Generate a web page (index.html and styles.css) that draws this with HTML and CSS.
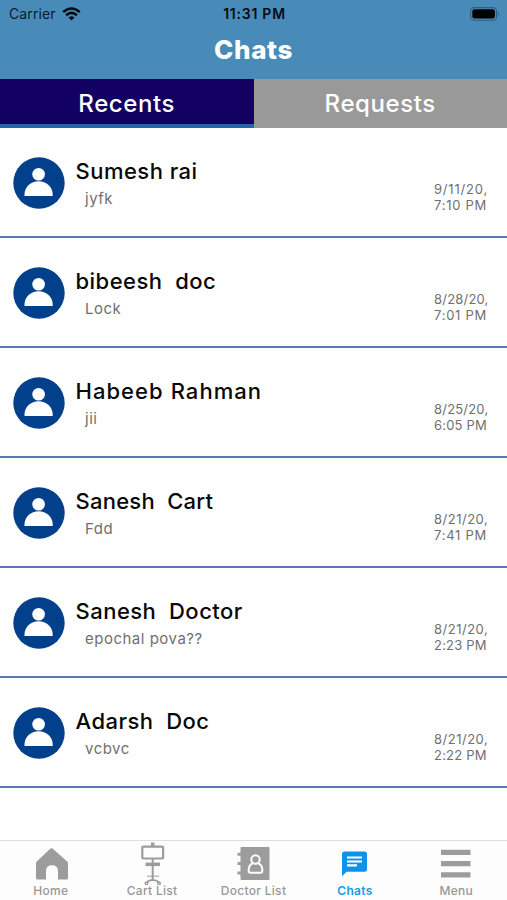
FILE: index.html
```html
<!DOCTYPE html>
<html lang="en">
<head>
<meta charset="utf-8">
<title>Chats</title>
<link rel="stylesheet" href="styles.css">
</head>
<body>
<svg class="defs" width="0" height="0" aria-hidden="true">
  <symbol id="avatar" viewBox="0 0 52 52">
    <circle cx="26" cy="26" r="25.7" fill="#03408b"/>
    <circle cx="25.6" cy="17.3" r="6.3" fill="#fff"/>
    <path d="M11.5 39v-1.5c0-7.5 6.300-13.200 14.100-13.200s14.100 5.700 14.100 13.200V39z" fill="#fff"/>
  </symbol>
</svg>
<div class="app">
  <header class="header">
    <div class="status">
      <div class="carrier"><span>Carrier</span>
        <svg width="19" height="14" viewBox="0 0 19 14" fill="none" stroke="#050b10" stroke-width="2.500"><path d="M1.200 5Q9.500-2 17.800 5M4.100 8.300Q9.500 3.500 14.900 8.300"/><path d="M6.500 10.400Q9.500 7.900 12.500 10.400L9.500 13.500z" fill="#050b10" stroke="none"/></svg>
      </div>
      <span class="clock">11:31 PM</span>
      <div class="battery"><svg width="30" height="14" viewBox="0 0 30 14"><rect x=".6" y=".6" width="26" height="12.600" rx="3.800" fill="none" stroke="#2f5f7d" stroke-width="1.100"/><rect x="2.300" y="2.300" width="22.600" height="9.200" rx="2.300"/><path d="M28 4.700q2 2.200 0 4.400z" fill="#2f5f7d"/></svg></div>
    </div>
    <h1 class="title">Chats</h1>
  </header>
  <nav class="tabs">
    <div class="tab tab-active">Recents</div>
    <div class="tab">Requests</div>
  </nav>
  <main class="list">
    <div class="row"><svg class="avatar"><use href="#avatar"/></svg><div class="body"><div class="name">Sumesh rai</div><div class="message">jyfk</div></div><div class="date"><div class="day-narrow">9/11/20,</div><div class="time-narrow">7:10 PM</div></div></div>
    <div class="row"><svg class="avatar"><use href="#avatar"/></svg><div class="body"><div class="name">bibeesh  doc</div><div class="message">Lock</div></div><div class="date"><div>8/28/20,</div><div class="time-narrow">7:01 PM</div></div></div>
    <div class="row"><svg class="avatar"><use href="#avatar"/></svg><div class="body"><div class="name name-wide">Habeeb Rahman</div><div class="message">jii</div></div><div class="date"><div>8/25/20,</div><div>6:05 PM</div></div></div>
    <div class="row"><svg class="avatar"><use href="#avatar"/></svg><div class="body"><div class="name name-tight">Sanesh  Cart</div><div class="message">Fdd</div></div><div class="date"><div class="day-mid">8/21/20,</div><div class="time-narrow">7:41 PM</div></div></div>
    <div class="row"><svg class="avatar"><use href="#avatar"/></svg><div class="body"><div class="name">Sanesh  Doctor</div><div class="message">epochal pova??</div></div><div class="date"><div class="day-mid">8/21/20,</div><div>2:23 PM</div></div></div>
    <div class="row"><svg class="avatar"><use href="#avatar"/></svg><div class="body"><div class="name">Adarsh  Doc</div><div class="message">vcbvc</div></div><div class="date"><div class="day-mid">8/21/20,</div><div>2:22 PM</div></div></div>
  </main>
  <nav class="bottom">
    <div class="item"><svg viewBox="0 0 44 44" fill="#9c9c9c"><path d="M22.500 7.200Q23.200 7.200 23.800 7.700L38.200 20.500Q39 21.200 39 22.200V37Q39 38.500 37.500 38.500H29V30Q29 24.300 23 24.300T17 30V38.500H8.500Q7 38.500 7 37V22.200Q7 21.200 7.800 20.500L21.200 7.700Q21.800 7.200 22.500 7.200z"/></svg><span>Home</span></div>
    <div class="item"><svg viewBox="0 0 44 44" fill="none" stroke="#9c9c9c"><rect x="12.300" y="5.700" width="20.800" height="11.800" rx="1" stroke-width="2.200"/><path d="M22.700 1.500v4" stroke-width="3.500"/><path d="M22.700 17v23" stroke-width="2"/><path d="M15.500 23.300h14.500" stroke-width="3.500"/><path d="M17 35.200h12" stroke-width="1"/><path d="M17 42q1.500-3.200 5.700-2.800 4.300-.4 6 2.800" stroke-width="1.600"/><circle cx="16.500" cy="42.300" r="1.300" stroke-width="1.400"/><circle cx="29" cy="42.300" r="1.300" stroke-width="1.400"/></svg><span>Cart List</span></div>
    <div class="item"><svg viewBox="0 0 44 44"><rect x="9.500" y="6" width="29" height="33" rx="1" fill="#9c9c9c"/><path d="M6.500 13.200h6M6.500 22.500h6M6.500 32h6" stroke="#9c9c9c" stroke-width="3"/><g fill="none" stroke="#fff" stroke-width="2"><circle cx="24.500" cy="18.500" r="4.200"/><path d="M21.500 22.300Q17.700 24.500 17.700 28.500V30Q17.700 31.800 19.500 31.800H29.500Q31.300 31.800 31.300 30V28.500Q31.300 24.500 27.500 22.300"/></g></svg><span>Doctor List</span></div>
    <div class="item item-active"><svg viewBox="0 0 44 44"><path d="M11.700 10.500H31.500Q34 10.500 34 13V28.200Q34 30.700 31.500 30.700H13.500L9 35.300V13Q9 10.500 11.700 10.500z" fill="#0d94ea"/><path d="M14 16.500h15M14 20.500h15M14 24.300h10" stroke="#fff" stroke-width="2.200"/></svg><span>Chats</span></div>
    <div class="item"><svg viewBox="0 0 44 44"><path d="M7 11.300h29.500M7 22.600h29.500M7 33.900h29.500" stroke="#9c9c9c" stroke-width="5.200"/></svg><span>Menu</span></div>
  </nav>
</div>
</body>
</html>
```
FILE: styles.css
```css
* { box-sizing: border-box; }
body { margin: 0; background: #fff; font-family: Inter, "Liberation Sans", sans-serif; }
.defs { display: none; }
.app { width: 507px; height: 900px; display: flex; flex-direction: column; overflow: hidden; }
.header { height: 79px; background: #488bb9; flex: none; }
.status { display: grid; grid-template-columns: 1fr auto 1fr; height: 27px; align-items: center; padding: 0 7px 0 9px; font-size: 14px; color: #0b1b27; }
.carrier { display: flex; align-items: center; gap: 6px; }
.carrier span { letter-spacing: .1px; }
.clock { font-weight: 600; color: #050b10; font-size: 14px; letter-spacing: .75px; }
.battery { display: flex; justify-content: flex-end; }
.title { margin: 5px 0 0; font-size: 26px; line-height: 36px; font-weight: 800; color: #fff; text-align: center; letter-spacing: .6px; }
.tabs { display: flex; height: 49px; flex: none; }
.tab { flex: 1; background: #999; color: #fff; font-size: 24px; font-weight: 500; line-height: 50px; text-align: center; letter-spacing: .6px; }
.tab-active { background: #120063; border-bottom: 4px solid #2865a8; }
.list { flex: 1; }
.row { height: 110px; display: flex; padding: 0 19px 0 12.500px; border-bottom: 2px solid #5d79b1; }
.avatar { width: 52px; height: 52px; margin-top: 29px; flex: none; }
.body { flex: 1; padding: 28px 0 0 11px; white-space: pre; }
.name { font-size: 22px; line-height: 30px; font-weight: 500; color: #080808; letter-spacing: .48px; }
.name-wide { letter-spacing: 1.050px; }
.name-tight { letter-spacing: .25px; }
.message { padding-left: 9.500px; font-size: 15px; line-height: 26px; color: #707070; letter-spacing: .5px; }
.date { width: 54px; padding-top: 53px; font-size: 13px; line-height: 16px; color: #707070; white-space: nowrap; letter-spacing: .2px; }
.day-narrow { letter-spacing: .8px; }
.day-mid { letter-spacing: .5px; }
.time-narrow { letter-spacing: .75px; }
.bottom { height: 60px; flex: none; display: grid; grid-template-columns: repeat(5, 1fr); border-top: 1px solid #dedede; background: #fdfdfd; }
.item { display: flex; flex-direction: column; align-items: center; color: #989898; font-size: 12px; font-weight: 500; line-height: 14px; }
.item svg { width: 44px; height: 44px; flex: none; }
.item span { letter-spacing: .3px; margin-top: -1px; }
.item-active { color: #169ae9; font-weight: 600; }
```
